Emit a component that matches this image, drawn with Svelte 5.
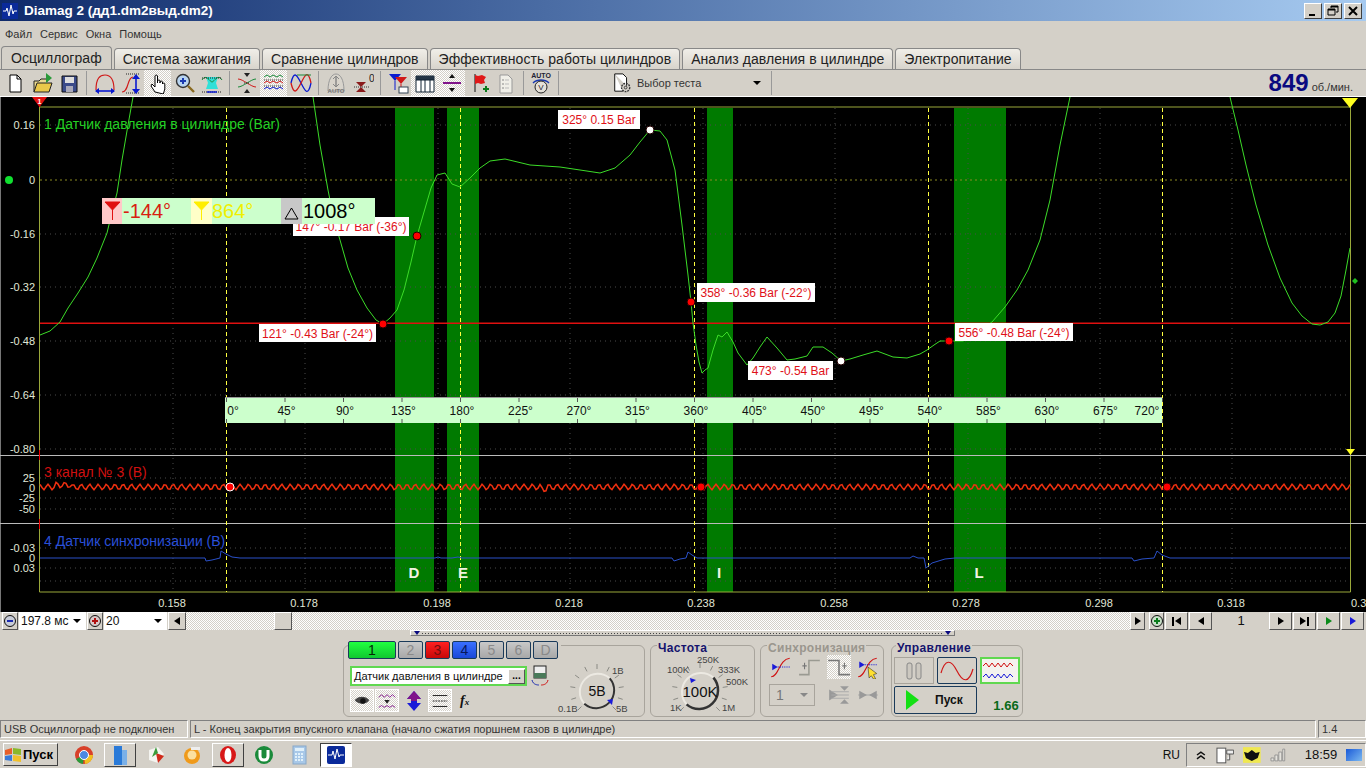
<script>
  const tabs = ['Система зажигания', 'Сравнение цилиндров', 'Эффективность работы цилиндров', 'Анализ давления в цилиндре', 'Электропитание'];
  const menu = ['Файл', 'Сервис', 'Окна', 'Помощь'];

  const icons = {
    new: '<path d="M6 3h7l4 4v13H6z" fill="#fff" stroke="#000"/><path d="M13 3v4h4" fill="none" stroke="#000"/>',
    open: '<path d="M3 20V9h5l2-2h6v3" fill="#e8d890" stroke="#222"/><path d="M3 20l3-9h15l-3 9z" fill="#e9c84a" stroke="#222"/><path d="M15 1l6 5-6 5z" fill="#2a9a3a"/>',
    save: '<path d="M4 4h15v16H4z" fill="#3a4a8a" stroke="#111"/><path d="M7 5h9v6H7z" fill="#ddd"/><path d="M8 14h7v6H8z" fill="#aab"/>',
    lobe: '<path d="M3 18C3 6 7 3 12 3s9 3 9 15" fill="none" stroke="#d01818" stroke-width="1.2"/><path d="M3 19h18" stroke="#0a1ad0" stroke-width="1.6"/><path d="M6 16l-4 3 4 3zM18 16l4 3-4 3z" fill="#0a1ad0"/>',
    scurve: '<path d="M2 20c7 0 5-15 11-15" fill="none" stroke="#d01818" stroke-width="1.2"/><path d="M6 2h14M6 21h14" stroke="#222" stroke-dasharray="1 1"/><path d="M16 5v14" stroke="#0a1ad0" stroke-width="1.6"/><path d="M12 7l4-5 4 5zM12 17l4 5 4-5z" fill="#0a1ad0"/>',
    hand: '<path d="M8 20l-4-6 1-2 3 3V4a1.3 1.3 0 012.500 0v7-2a1.3 1.3 0 012.500 0v2-1a1.3 1.3 0 012.500 0v2a1.2 1.2 0 012.300 0v5l-1.500 5z" fill="#fff" stroke="#000"/>',
    zoom: '<circle cx="9" cy="9" r="6.500" fill="#b8d4f0" stroke="#333" stroke-width="1.4"/><path d="M6 9h6M9 6v6" stroke="#1a3ab0" stroke-width="2"/><path d="M14 14l6 6" stroke="#8a6a20" stroke-width="2.4"/>',
    wide: '<path d="M5 5h12l-2 6 2 6H5l2-6z" fill="#30e0d8"/><path d="M1 8c4-7 8 2 10 2s6-9 10-2" fill="none" stroke="#1a8a3a"/><path d="M1 6h20M1 20h20" stroke="#222" stroke-dasharray="1 1"/><path d="M6 20h10" stroke="#0a1ad0" stroke-width="1.5"/>',
    cross: '<path d="M2 7c5 0 13 8 18 8" fill="none" stroke="#d01818"/><path d="M2 15c5 0 13-8 18-8" fill="none" stroke="#1a8a3a"/><path d="M8 11h6" stroke="#222" stroke-dasharray="1 1"/><path d="M8 1h6l-3 4zM8 21h6l-3-4z" fill="#222"/>',
    waves: '<path d="M1 5l3-2 3 2 3-2 4 2 3-2 3 2" fill="none" stroke="#1a8a3a"/><path d="M1 11l3-2 3 2 3-2 4 2 3-2 3 2" fill="none" stroke="#d01818"/><path d="M1 17l3-2 3 2 3-2 4 2 3-2 3 2" fill="none" stroke="#0a1ad0"/><path d="M1 8h20M1 14h20" stroke="#333" stroke-dasharray="1 1"/>',
    sines: '<path d="M1 11C4-2 7 3 11 11s7 14 10 0" fill="none" stroke="#0a1ad0" stroke-width="1.3"/><path d="M1 11C4 24 7 19 11 11s7-14 10 0" fill="none" stroke="#d01818" stroke-width="1.3"/><path d="M7 3h14" stroke="#1a8a3a"/>',
    auto: '<path d="M3 19C3 7 7 2 11 2s8 5 8 17z" fill="#d8d4cc" stroke="#999"/><path d="M11 5v9" stroke="#888" stroke-width="1.5"/><path d="M8 7l3-3 3 3M8 12l3 3 3-3" fill="none" stroke="#888"/><text x="11" y="21" font-size="6" font-weight="700" text-anchor="middle" fill="#777" font-family="Liberation Sans">AUTO</text>',
    zero: '<path d="M4 10h10l-5 5zM4 20h10l-5-5z" fill="#8a1a1a"/><path d="M2 15h16" stroke="#333" stroke-dasharray="1 1"/><text x="17" y="10" font-size="10" fill="#222" font-family="Liberation Sans">0</text>',
    filter: '<path d="M2 2h12l-6 7z" fill="#0a1ad0"/><path d="M8 9v9" stroke="#0a1ad0"/><path d="M8 5h12l-6 7z" fill="#d01818"/><path d="M14 12v6" stroke="#d01818"/><rect x="12" y="15" width="9" height="6" fill="#fff" stroke="#345"/>',
    table: '<path d="M2 4h18v16H2z" fill="#fff" stroke="#123"/><path d="M2 4h18v4H2z" fill="#234"/><path d="M7 8v12M11 8v12M16 8v12M2 8h18" stroke="#123"/>',
    cursor: '<path d="M2 11h18" stroke="#80148a" stroke-width="2"/><path d="M8 6h6l-3-4zM8 16h6l-3 4z" fill="#111"/>',
    flag: '<path d="M7 2v18" stroke="#111"/><path d="M7 3l3 1 4-1 4 2-2 3 1 3-4 1-3-1-3 1z" fill="#e01818"/><path d="M15 17h6M18 14v6" stroke="#0a7a1a" stroke-width="2"/>',
    sheet: '<path d="M5 3h8l4 4v14H5z" fill="#f0efe8" stroke="#999"/><path d="M7 8h2M7 12h2M7 16h2" stroke="#888"/><path d="M10 8h4M10 12h4M10 16h4" stroke="#bbb"/>',
    autov: '<text x="11" y="6" font-size="7" font-weight="700" text-anchor="middle" fill="#223" font-family="Liberation Sans">AUTO</text><path d="M3 11c4-4 12-4 16 0" fill="none" stroke="#1a3ab0" stroke-width="1.4"/><circle cx="11" cy="15" r="6" fill="#e4e0d8" stroke="#222"/><text x="11" y="18" font-size="8" text-anchor="middle" fill="#223" font-family="Liberation Sans">V</text>'
  };

  const toolbar = [
    { i: 'new' }, { i: 'open' }, { i: 'save' }, null,
    { i: 'lobe' }, { i: 'scurve' }, { i: 'hand', on: true }, { i: 'zoom' }, { i: 'wide' }, null,
    { i: 'cross' }, { i: 'waves', on: true }, { i: 'sines' }, null,
    { i: 'auto' }, { i: 'zero' }, null,
    { i: 'filter' }, { i: 'table', on: true }, { i: 'cursor', on: true }, { i: 'flag' }, { i: 'sheet' }, null,
    { i: 'autov' }, null
  ];

  // trace of channel 1, in screen coordinates
  const trace = [
    [40,335],[50,331],[60,322],[68,308],[78,293],[88,277],[97,258],[107,233],[112,212],[117,193],[122,160],[128,125],[133,97]
  ];
  const trace2 = [
    [313,97],[320,145],[328,190],[334,220],[340,240],[348,268],[357,290],[367,308],[376,320],[383,324],[390,318],[397,310],
    [404,290],[411,262],[417,236],[424,212],[431,188],[437,175],[445,173],[452,184],[460,187],[470,178],[480,168],[490,161],
    [505,159],[530,165],[560,167],[580,170],[600,173],[615,168],[630,155],[640,142],[650,130],[660,131],[667,140],[675,170],
    [682,225],[688,275],[691,302],[693,323],[696,345],[699,362],[702,373],[705,370],[708,368],[713,350],[718,335],[722,337],
    [727,332],[733,342],[738,353],[747,365],[753,358],[760,347],[767,337],[777,348],[787,360],[795,359],[807,356],[813,347],
    [823,347],[832,353],[841,361],[850,359],[863,355],[877,351],[893,357],[907,358],[920,354],[927,350],[934,345],[940,341],
    [949,341],[963,341],[975,335],[985,327],[992,322],[1005,307],[1017,290],[1028,270],[1040,240],[1050,200],[1060,145],[1070,97]
  ];
  const trace3 = [
    [1230,97],[1238,130],[1246,165],[1256,205],[1268,245],[1280,278],[1292,303],[1302,316],[1312,324],[1320,325],[1328,322],[1335,313],[1341,296],[1346,270],[1350,248]
  ];
  const line = (a) => a.map((p) => p.join(',')).join(' ');

  // channel 3 sits on a small ripple, channel 4 on a flat line with sync pulses
  const ripple = [];
  for (let x = 40; x <= 1350; x += 2) {
    const bump = x > 54 && x < 72 ? -2 : x > 540 && x < 548 ? 2 : 0;
    ripple.push([x, +(487 + 2.800 * Math.sin((x / 8.35) * Math.PI * 2) + bump).toFixed(1)]);
  }
  const sync = [
    [40,558],[205,558],[206,561],[212,560],[220,558],[221,551],[226,554],[232,557],[240,558],[435,558],[438,557],[441,558],[452,558],[458,557],[462,558],
    [672,558],[674,561],[680,559],[686,558],[688,552],[692,555],[697,558],[910,558],[913,556],[918,558],[924,558],[926,568],[932,563],[945,559],[955,558],
    [1132,558],[1134,561],[1142,559],[1154,558],[1157,551],[1162,555],[1170,558],[1350,558]
  ];

  const yTicks = [['0.16',125],['0',180],['-0.16',234],['-0.32',287],['-0.48',341],['-0.64',395],['-0.80',449],
    ['25',478],['0',488],['-25',498],['-50',509],['-0.03',548],['0',558],['0.03',568]];
  const xTicks = [['0.158',172],['0.178',304],['0.198',437],['0.218',569],['0.238',701],['0.258',834],['0.278',966],['0.298',1099],['0.318',1231]];
  const grid = [173,305,438,570,703,835,968,1100,1232];
  const gridY = [125,234,287,341,395,449,478,498,509,548,568,581];
  const bands = [[395,39],[447,32],[707,26],[954,52]];
  const marks = [226,460,694,928,1162];
  const degrees = Array.from({ length: 17 }, (_, i) => i * 45);
  const marks2 = [['D',414],['E',463],['I',719],['L',979]];

  const notes = [
    { x: 558, y: 110, w: 82, h: 19, t: '325° 0.15 Bar' },
    { x: 293, y: 217, w: 116, h: 19, t: '147° -0.17 Bar (-36°)' },
    { x: 697, y: 283, w: 118, h: 19, t: '358° -0.36 Bar (-22°)' },
    { x: 259, y: 324, w: 117, h: 18, t: '121° -0.43 Bar (-24°)' },
    { x: 748, y: 361, w: 85, h: 19, t: '473° -0.54 Bar' },
    { x: 955, y: 323, w: 118, h: 18, t: '556° -0.48 Bar (-24°)' }
  ];
  const dots = [[650,130,'#fff'],[417,236,'#f00'],[691,302,'#f00'],[383,324,'#f00'],[841,361,'#fff'],[949,341,'#f00']];

  const channels = [
    { n: '1', c: 'green' }, { n: '2', c: '' }, { n: '3', c: 'red' }, { n: '4', c: 'blue' },
    { n: '5', c: '' }, { n: '6', c: '' }, { n: 'D', c: '' }
  ];

  function knobTicks(cx, cy, r1, r2) {
    const out = [];
    for (let a = 135; a <= 405; a += 27) {
      const t = (a * Math.PI) / 180;
      out.push([cx + r1 * Math.cos(t), cy + r1 * Math.sin(t), cx + r2 * Math.cos(t), cy + r2 * Math.sin(t)]);
    }
    return out;
  }
  const voltTicks = knobTicks(35, 34, 22, 27);
  const freqTicks = knobTicks(47, 36, 23, 28);
</script>

<div class="window">
  <header class="titlebar">
    <svg class="appicon" viewBox="0 0 16 16"><rect width="16" height="16" fill="#0a2a9a" /><path d="M1 8h3l1-3 2 8 2-11 2 9 1-3h3" fill="none" stroke="#fff" /></svg>
    <span class="title">Diamag 2 (дд1.dm2выд.dm2)</span>
    <div class="winbtns">
      <button class="winbtn"><svg viewBox="0 0 16 14"><path d="M4 10h6v2H4z" /></svg></button>
      <button class="winbtn"><svg viewBox="0 0 16 14"><path d="M6 2h7v6h-2M6 2v2M3 5h7v6H3zM3 5.500h7" fill="none" stroke="#000" /><path d="M6 2h7v1.500H6zM3 5h7v1.500H3z" /></svg></button>
      <button class="winbtn close"><svg viewBox="0 0 16 14"><path d="M4 3l8 8M12 3l-8 8" stroke="#000" stroke-width="2" /></svg></button>
    </div>
  </header>

  <nav class="menu">
    {#each menu as m}<span>{m}</span>{/each}
  </nav>

  <div class="tabs">
    <div class="tab active">Осциллограф</div>
    {#each tabs as t}<div class="tab">{t}</div>{/each}
  </div>

  <div class="toolbar">
    {#each toolbar as b}
      {#if b}
        <div class="tool" class:on={b.on}>
          <svg viewBox="0 0 22 22" width="22" height="22">{@html icons[b.i]}</svg>
        </div>
      {:else}
        <div class="sep"></div>
      {/if}
    {/each}
    <div class="testpick">
      <svg viewBox="0 0 22 24" width="20" height="22">
        <path d="M3 2h9l4 4v9M3 2v19h9" fill="#fff" stroke="#000" />
        <circle cx="15" cy="17" r="4.500" fill="none" stroke="#333" stroke-width="1.500" stroke-dasharray="2 1" />
        <circle cx="15" cy="17" r="1.500" fill="none" stroke="#333" />
      </svg>
      <span>Выбор теста</span>
      <i class="caret"></i>
    </div>
    <div class="sep"></div>
    <div class="rpm"><b>849</b> <span>об./мин.</span></div>
  </div>

  <svg class="scope" viewBox="0 97 1366 515" font-family="Liberation Sans, Arial, sans-serif">
    <rect x="0" y="97" width="1366" height="515" fill="#000" />
    <path d="M0.500 97v515" stroke="#777" />

    {#each bands as [x, w]}
      <rect {x} y="108" width={w} height="484" fill="#007a00" />
    {/each}

    {#each grid as x}
      <path d="M{x} 108V592" stroke="#4a4a4a" stroke-dasharray="1 4" />
    {/each}
    {#each gridY as y}
      <path d="M40 {y}H1350" stroke="#4a4a4a" stroke-dasharray="1 4" />
    {/each}
    <path d="M40 180H1350" stroke="#8a8a20" stroke-dasharray="2 3" />

    <path d="M39.500 107V592H1350.500V107H39.500" fill="none" stroke="#9aa83a" />
    <path d="M0 455.500H1366M0 523.500H1366" stroke="#bbb" />
    <path d="M39.500 97v10M39.500 450v10M39.500 519v10" stroke="#e00" />

    {#each marks as x}
      <path d="M{x + 0.5} 108V592" stroke="#ffff40" stroke-dasharray="4 3" />
    {/each}

    <rect x="40" y="322.500" width="1310" height="1.500" fill="#e01010" />

    <polyline points={line(trace)} fill="none" stroke="#3cdc28" />
    <polyline points={line(trace2)} fill="none" stroke="#3cdc28" />
    <polyline points={line(trace3)} fill="none" stroke="#3cdc28" />
    <polyline points={line(ripple)} fill="none" stroke="#f03010" stroke-width="1.500" />
    <polyline points={line(sync)} fill="none" stroke="#2a50c8" />

    {#each yTicks as [t, y]}
      <text x="35" y={y + 4} class="tick" text-anchor="end">{t}</text>
    {/each}
    {#each xTicks as [t, x]}
      <text {x} y="607" class="tick" text-anchor="middle">{t}</text>
    {/each}
    <text x="1351" y="607" class="tick">0.3</text>

    <text x="44" y="129" class="chan" fill="#24d024">1 Датчик давления в цилиндре (Bar)</text>
    <text x="44" y="477" class="chan" fill="#d01010">3 канал № 3 (В)</text>
    <text x="44" y="546" class="chan" fill="#2a50d8">4 Датчик синхронизации (В)</text>

    {#each marks2 as [t, x]}
      <text {x} y="578" class="bandmark" text-anchor="middle">{t}</text>
    {/each}

    <rect x="225" y="397" width="937" height="26" fill="#ccffcc" />
    <path d="M225 397.500H1162" stroke="#999" />
    {#each degrees as d, i}
      <path d="M{226.5 + i * 58.5} 398v4M{226.5 + i * 58.5} 419v4" stroke="#555" />
      <text x={i === 0 ? 233 : i === 16 ? 1147 : 228 + i * 58.5} y="415" class="deg" text-anchor="middle">{d}°</text>
    {/each}

    {#each notes as n}
      <rect x={n.x} y={n.y} width={n.w} height={n.h} fill="#fff" />
      <text x={n.x + n.w / 2} y={n.y + 14} class="note" text-anchor="middle">{n.t}</text>
    {/each}
    {#each dots as [x, y, c]}
      <circle cx={x} cy={y} r="4" fill={c} stroke="#200" />
    {/each}
    <circle cx="230" cy="487" r="4" fill="#f00" stroke="#fff" />
    <circle cx="701" cy="487" r="4" fill="#f00" stroke="#300" />
    <circle cx="1167" cy="487" r="4" fill="#f00" stroke="#300" />

    <circle cx="9" cy="180" r="4" fill="#10e030" />
    <path d="M32 97h15l-7.500 10z" fill="#e01010" />
    <text x="39.500" y="104" font-size="7" font-weight="700" fill="#fff" text-anchor="middle">1</text>
    <path d="M1342 98h16l-8 10z" fill="#ffff20" />
    <path d="M1346 449h9l-4.500 6z" fill="#ffff20" />
    <path d="M1355 278l3 3-3 3-3-3z" fill="#20c020" />

    <rect x="102" y="198" width="273" height="26" fill="#ccffcc" />
    <rect x="102" y="198" width="20" height="26" fill="#ffc8c8" />
    <rect x="191" y="198" width="21" height="26" fill="#ffffc8" />
    <rect x="281" y="198" width="21" height="26" fill="#c8c8c8" />
    <path d="M105 202h15l-7.500 8zM112.500 210v10" fill="#e01010" stroke="#e01010" />
    <path d="M194 202h15l-7.500 8zM201.500 210v10" fill="#ffee00" stroke="#ffee00" />
    <path d="M285 219l6.500-11 6.500 11z" fill="none" stroke="#000" />
    <text x="123" y="218" class="big" fill="#d82010">-144°</text>
    <text x="212" y="218" class="big" fill="#f0f000">864°</text>
    <text x="303" y="218" class="big" fill="#000">1008°</text>
  </svg>

  <div class="scrollrow">
    <button class="round"><svg viewBox="0 0 14 14"><circle cx="7" cy="7" r="5.500" fill="#c8ccd8" stroke="#111" /><path d="M4 7h6" stroke="#1a2ab0" stroke-width="2" /></svg></button>
    <div class="combo first"><span>197.8 мс</span><i class="caret"></i></div>
    <button class="round"><svg viewBox="0 0 14 14"><circle cx="7" cy="7" r="5.500" fill="#d8c8c8" stroke="#111" /><path d="M4 7h6M7 4v6" stroke="#b01010" stroke-width="2" /></svg></button>
    <div class="combo second"><span>20</span><i class="caret"></i></div>
    <button class="step"><i class="tri left"></i></button>
    <div class="track"><div class="thumb"></div></div>
    <button class="step short"><i class="tri right"></i></button>
    <button class="round plus"><svg viewBox="0 0 14 14"><circle cx="7" cy="7" r="5.500" fill="#c8e0c8" stroke="#111" /><path d="M4 7h6M7 4v6" stroke="#0a7a1a" stroke-width="2" /></svg></button>
    <button class="nav"><b class="bar"></b><i class="tri left"></i></button>
    <button class="nav"><i class="tri left"></i></button>
    <span class="page">1</span>
    <button class="nav"><i class="tri right"></i></button>
    <button class="nav"><i class="tri right"></i><b class="bar"></b></button>
    <button class="nav"><i class="tri right g"></i></button>
    <button class="nav"><i class="tri right b"></i></button>
  </div>

  <div class="panel">
    <div class="handle"><i class="down"></i><span></span><i class="down"></i></div>
    <div class="groups">
      <section class="group g1">
        <div class="chanrow">
          {#each channels as ch, i}
            <button class="chbtn {ch.c}" class:wide={i === 0}>{ch.n}</button>
          {/each}
        </div>
        <div class="g1body">
          <div>
            <div class="namerow">
              <div class="namebox"><span>Датчик давления в цилиндре</span><button class="dots">...</button></div>
              <svg viewBox="0 0 22 22" width="22" height="22"><rect x="5" y="1" width="12" height="12" fill="#eee" stroke="#222" /><rect x="5" y="8" width="12" height="5" fill="#4a7a5a" /><path d="M3 15c1 5 6 5 7 5" fill="none" stroke="#1a2ab0" /><path d="M19 15c-1 5-6 5-7 5" fill="none" stroke="#d01010" /></svg>
            </div>
            <div class="iconrow">
              <div class="sq on"><svg viewBox="0 0 22 22" width="20" height="20"><path d="M3 10c4-5 12-5 16 0-2 5-12 6-16 0z" fill="#444" /><circle cx="12" cy="11" r="3" fill="#111" /></svg></div>
              <div class="sq on"><svg viewBox="0 0 22 22" width="20" height="20"><path d="M2 7l3-3 3 3 3-3 3 3 3-3 3 3" fill="none" stroke="#80148a" /><path d="M2 18l3-2 3 2 3-2 3 2 3-2 3 2" fill="none" stroke="#80148a" /><path d="M8 10h6l-3 4z" fill="#222" /></svg></div>
              <div class="sq tight"><svg viewBox="0 0 22 22" width="22" height="22"><path d="M11 1l7 8h-4v4h4l-7 8-7-8h4V9H4z" fill="#1a1ad8" /><path d="M11 1l7 8h-4v2H8V9H4z" fill="#80148a" /></svg></div>
              <div class="sq on"><svg viewBox="0 0 22 22" width="20" height="20"><path d="M3 5h16M3 17h16" stroke="#111" /><path d="M3 11h16" stroke="#111" stroke-dasharray="2 1" /></svg></div>
              <em class="fx">f<small>x</small></em>
            </div>
          </div>
          <svg class="knob" viewBox="0 0 76 62" width="76" height="62">
            {#each voltTicks as t}<line x1={t[0]} y1={t[1]} x2={t[2]} y2={t[3]} stroke="#8a8a84" />{/each}
            <circle cx="35" cy="34" r="18" fill="#d4d0c8" />
            <path d="M22.300 46.700a18 18 0 0 1 25.400-25.400" fill="none" stroke="#ece9e2" stroke-width="2" />
            <path d="M47.700 21.300a18 18 0 0 1-25.400 25.400" fill="none" stroke="#333" stroke-width="2" />
            <path d="M45 43l6-1-1 6z" fill="#1a1ad8" />
            <text x="35" y="39" class="knobv" text-anchor="middle">5В</text>
            <text x="50" y="17" class="knobl">1В</text>
            <text x="-4" y="55" class="knobl">0.1В</text>
            <text x="54" y="55" class="knobl">5В</text>
          </svg>
        </div>
      </section>

      <section class="group g2">
        <div class="legend navy">Частота</div>
        <svg class="knob2" viewBox="0 0 100 62" width="100" height="62">
          {#each freqTicks as t}<line x1={t[0]} y1={t[1]} x2={t[2]} y2={t[3]} stroke="#8a8a84" />{/each}
          <circle cx="47" cy="36" r="19" fill="#d4d0c8" />
          <path d="M33.600 49.400a19 19 0 0 1 26.800-26.800" fill="none" stroke="#ece9e2" stroke-width="2" />
          <path d="M60.400 22.600a19 19 0 0 1-26.800 26.800" fill="none" stroke="#333" stroke-width="2.500" />
          <path d="M37 23l6 2-5 3z" fill="#1a1ad8" />
          <text x="47" y="42" class="knobv big2" text-anchor="middle">100K</text>
          <text x="14" y="18" class="knobl">100K</text>
          <text x="44" y="8" class="knobl">250K</text>
          <text x="65" y="18" class="knobl">333K</text>
          <text x="73" y="30" class="knobl">500K</text>
          <text x="69" y="56" class="knobl">1M</text>
          <text x="17" y="56" class="knobl">1K</text>
        </svg>
      </section>

      <section class="group g3">
        <div class="legend gray">Синхронизация</div>
        <div class="syncgrid">
          <svg viewBox="0 0 22 22" width="24" height="24"><path d="M2 20C9 20 9 4 19 3" fill="none" stroke="#d01010" /><path d="M3 8l5 3-5 3z" fill="#1a1ad8" /><path d="M8 11h12" stroke="#1a1ad8" stroke-dasharray="1 1" /></svg>
          <svg viewBox="0 0 22 22" width="24" height="24"><path d="M1 18h9V5h10" fill="none" stroke="#9a9a92" stroke-width="1.400" /><path d="M4 10h4M6 7v6" stroke="#777" /></svg>
          <div class="syncon"><svg viewBox="0 0 22 22" width="24" height="24"><path d="M1 5h10v13h10" fill="none" stroke="#777" stroke-width="1.400" /><path d="M14 10h4M16 7v6" stroke="#777" /></svg></div>
          <svg viewBox="0 0 22 22" width="24" height="24"><path d="M2 20C9 20 9 4 19 3" fill="none" stroke="#d01010" /><path d="M3 6l5 3-5 3z" fill="#1a1ad8" /><path d="M8 9h12" stroke="#1a1ad8" stroke-dasharray="1 1" /><path d="M11 11l8 6-3 1 2 4-2 0-2-3-2 2z" fill="#ffe030" stroke="#222" stroke-width=".5" /></svg>
          <div class="mini"><span>1</span><i class="caret gray"></i></div>
          <svg viewBox="0 0 22 22" width="24" height="24"><path d="M2 6l8 5-8 5z" fill="#999" /><path d="M4 8h16M4 11h16M4 14h16" stroke="#aaa" /><path d="M12 3h8l-4 4zM12 19h8l-4-4z" fill="#999" /></svg>
          <svg viewBox="0 0 22 22" width="24" height="24"><path d="M2 11h18" stroke="#aaa" /><path d="M3 7l7 4-7 4zM19 7l-7 4 7 4z" fill="#999" /></svg>
        </div>
      </section>

      <section class="group g4">
        <div class="legend navy">Управление</div>
        <div class="ctrlgrid">
          <button class="ctl flat"><svg viewBox="0 0 24 22" width="24" height="22"><rect x="5" y="3" width="5" height="16" rx="2" fill="#ccc8c0" stroke="#888" /><rect x="14" y="3" width="5" height="16" rx="2" fill="#ccc8c0" stroke="#888" /></svg></button>
          <button class="ctl dark"><svg viewBox="0 0 36 24" width="36" height="24"><path d="M2 14C6 0 12 0 18 12s12 12 16-2" fill="none" stroke="#d01818" stroke-width="1.200" /></svg></button>
          <button class="ctl greenb"><svg viewBox="0 0 36 24" width="36" height="24"><path d="M1 7l3-3 3 4 3-4 3 4 3-4 3 4 3-4 3 4 3-4 3 3" fill="none" stroke="#d01010" /><path d="M1 18l3-3 3 4 3-4 3 4 3-4 3 4 3-4 3 4 3-4 3 3" fill="none" stroke="#1a1ad8" /></svg></button>
          <button class="start"><svg viewBox="0 0 14 20" width="14" height="20"><path d="M1 0l13 10L1 20z" fill="#14e014" /></svg><b>Пуск</b></button>
          <b class="ver">1.66</b>
        </div>
      </section>
    </div>
  </div>

  <footer class="status">
    <div class="cell c1">USB Осциллограф не подключен</div>
    <div class="cell c2">L - Конец закрытия впускного клапана (начало сжатия поршнем газов в цилиндре)</div>
    <div class="cell c3">1.4</div>
  </footer>

  <div class="taskbar">
    <button class="startbtn">
      <svg viewBox="0 0 18 16" width="18" height="16"><path d="M1 3l7-2v6l-7 1z" fill="#e8602a" /><path d="M9 1l8 1v6l-8-1z" fill="#8ab82a" /><path d="M1 9l7-1v6l-7-1z" fill="#3a7ad8" /><path d="M9 8l8 1v6l-8-1z" fill="#f0c02a" /></svg>
      <b>Пуск</b>
    </button>
    <div class="quick">
      <div class="ti"><svg viewBox="0 0 20 20" width="20" height="20"><circle cx="10" cy="10" r="9" fill="#d8402a" /><path d="M10 10L2 14a9 9 0 0 0 7 5z" fill="#2a9a3a" /><path d="M10 10l1 9a9 9 0 0 0 8-9z" fill="#f0c020" /><circle cx="10" cy="10" r="4.500" fill="#4a88e0" stroke="#fff" /></svg></div>
      <div class="ti raised"><svg viewBox="0 0 20 22" width="20" height="22"><path d="M4 2h8v19H4z" fill="#2a7ad8" /><path d="M12 6h5v15h-5z" fill="#7ab0e8" /></svg></div>
      <div class="ti"><svg viewBox="0 0 20 20" width="20" height="20"><path d="M3 5l9-3 6 7-6 9-9-3z" fill="#f4f4f0" /><path d="M10 8l8 3-6 7z" fill="#d02a1a" /><path d="M6 12l4-10 2 6z" fill="#3a9a3a" /></svg></div>
      <div class="ti"><svg viewBox="0 0 20 20" width="20" height="20"><circle cx="10" cy="11" r="8" fill="#f09a1a" /><circle cx="10" cy="10" r="4.500" fill="#fbe0a0" /><path d="M9 2h9v3H9z" fill="#eee" /></svg></div>
      <div class="ti raised"><svg viewBox="0 0 20 20" width="20" height="20"><ellipse cx="10" cy="10" rx="8" ry="9" fill="#d81818" /><ellipse cx="10" cy="10" rx="3.500" ry="7" fill="#fff" /></svg></div>
      <div class="ti"><svg viewBox="0 0 20 20" width="20" height="20"><circle cx="10" cy="10" r="9" fill="#1a8a3a" /><path d="M6 5v6c0 3 2 4 4 4s4-1 4-4V5" fill="none" stroke="#fff" stroke-width="3" /></svg></div>
      <div class="ti"><svg viewBox="0 0 20 20" width="20" height="20"><rect x="3" y="1" width="13" height="18" fill="#a8c8e8" stroke="#88a8c8" /><rect x="5" y="3" width="9" height="3" fill="#e0f0fa" /><path d="M5 9h9M5 12h9M5 15h9" stroke="#e0f0fa" stroke-width="2" stroke-dasharray="2 1" /></svg></div>
      <div class="ti pressed"><svg viewBox="0 0 20 20" width="20" height="20"><rect x="1" y="1" width="18" height="18" rx="2" fill="#0a2a9a" /><path d="M2 10h4l1-4 2 8 2-10 2 8 1-2h4" fill="none" stroke="#fff" /></svg></div>
    </div>
    <span class="lang">RU</span>
    <div class="tray">
      <svg viewBox="0 0 10 10" width="10" height="10"><path d="M1 5l4-3 4 3M1 9l4-3 4 3" fill="none" stroke="#111" stroke-width="1.500" /></svg>
      <svg viewBox="0 0 20 20" width="20" height="20"><rect x="2" y="3" width="9" height="15" fill="#fff" stroke="#555" /><path d="M12 5h7v4h-7zM15 9v6h-3" fill="#eee" stroke="#555" /></svg>
      <svg viewBox="0 0 18 16" width="18" height="16"><rect width="18" height="16" fill="#f0e850" /><path d="M1 5l4 1 4-3 4 3 4-1-2 6-6 3-6-3z" fill="#111" /></svg>
      <svg viewBox="0 0 16 14" width="16" height="14"><path d="M1 10h3v3H1zM5 7h3v6H5zM9 4h3v9H9zM13 1h2v12h-2z" fill="#e4e2dc" stroke="#888" stroke-width=".8" /></svg>
      <span class="clock">18:59</span>
      <div class="showdesk"></div>
    </div>
  </div>
</div>

<style>
  :global(body) {
    margin: 0;
    overflow: hidden;
    background: #d4d0c8;
  }

  .window {
    width: 1366px;
    height: 768px;
    display: flex;
    flex-direction: column;
    background: #d4d0c8;
    font-family: "Liberation Sans", Arial, sans-serif;
    font-size: 11px;
    color: #111;
    overflow: hidden;
  }

  button {
    font-family: inherit;
    padding: 0;
    margin: 0;
  }

  .titlebar {
    height: 21px;
    flex: none;
    display: flex;
    align-items: center;
    padding: 0 4px 0 2px;
    gap: 6px;
    background: linear-gradient(90deg, #0f2a6a 0%, #4a6ca4 40%, #a6caf0 100%);
    color: #fff;
  }

  .appicon {
    width: 16px;
    height: 16px;
  }

  .title {
    font-weight: 700;
    font-size: 13.500px;
  }

  .winbtns {
    margin-left: auto;
    display: flex;
    gap: 2px;
  }

  .winbtn {
    width: 18px;
    height: 16px;
    background: #d4d0c8;
    border: 1px solid;
    border-color: #fff #404040 #404040 #fff;
    display: flex;
  }

  .winbtn svg {
    width: 16px;
    height: 14px;
  }

  .menu {
    height: 26px;
    flex: none;
    display: flex;
    align-items: center;
    gap: 8px;
    padding-left: 5px;
    color: #333;
  }

  .tabs {
    height: 22px;
    flex: none;
    display: flex;
    align-items: flex-end;
    gap: 2px;
    padding-left: 1px;
    font-size: 14px;
    letter-spacing: 0.05px;
    color: #222;
  }

  .tab {
    height: 20px;
    padding: 0 8px;
    display: flex;
    align-items: center;
    background: linear-gradient(#f0eee8, #d8d4cc);
    border: 1px solid #888;
    border-bottom: none;
    border-radius: 4px 4px 0 0;
    white-space: nowrap;
  }

  .tab.active {
    height: 22px;
    background: #d4d0c8;
    padding: 0 9px;
  }

  .toolbar {
    height: 28px;
    flex: none;
    display: flex;
    align-items: center;
    padding-left: 1px;
    border-top: 1px solid #888;
    border-bottom: 1px solid #fff;
    box-sizing: border-box;
  }

  .tool {
    width: 27px;
    height: 26px;
    display: flex;
    align-items: center;
    justify-content: center;
    box-sizing: border-box;
  }

  .tool.on {
    background: repeating-conic-gradient(#fff 0 25%, #d4d0c8 0 50%) 0 0 / 2px 2px;
  }

  .sep {
    width: 8px;
    height: 24px;
    flex: none;
    background: linear-gradient(#999, #999) center / 1px 100% no-repeat;
  }

  .testpick {
    margin-left: 50px;
    width: 155px;
    display: flex;
    align-items: center;
    gap: 5px;
    font-size: 11px;
    color: #333;
  }

  .caret {
    display: block;
    width: 0;
    height: 0;
    margin-left: auto;
    border: 4px solid transparent;
    border-top-color: #000;
    border-bottom: none;
  }

  .testpick .caret {
    margin-right: 6px;
  }

  .rpm {
    margin-left: auto;
    padding-right: 13px;
    display: flex;
    align-items: baseline;
    gap: 3px;
  }

  .rpm b {
    font-size: 24px;
    color: #0a0a80;
  }

  .rpm span {
    font-size: 11px;
    color: #333;
  }

  .scope {
    width: 1366px;
    height: 515px;
    flex: none;
    display: block;
  }

  .tick {
    font-size: 11px;
    fill: #e0e8d8;
  }

  .chan {
    font-size: 14px;
  }

  .bandmark {
    font-size: 15px;
    font-weight: 700;
    fill: #f0f4e0;
  }

  .deg {
    font-size: 12px;
    fill: #111;
  }

  .note {
    font-size: 12px;
    fill: #e01018;
  }

  .big {
    font-size: 20px;
  }

  .scrollrow {
    height: 18px;
    flex: none;
    display: flex;
    align-items: stretch;
    padding: 0 2px;
  }

  .round {
    width: 16px;
    border: 1px solid;
    border-color: #fff #555 #555 #fff;
    background: #d4d0c8;
    display: flex;
    align-items: center;
    justify-content: center;
    margin-right: 1px;
    flex: none;
  }

  .round svg {
    width: 14px;
    height: 14px;
    flex: none;
  }

  .round.plus {
    width: 15px;
    margin: 0 1px 0 4px;
  }

  .combo {
    margin-right: 1px;
    background: #fff;
    display: flex;
    align-items: center;
    padding: 0 5px 0 2px;
    box-sizing: border-box;
    font-size: 12px;
    flex: none;
  }

  .combo.first {
    width: 67px;
  }

  .combo.second {
    width: 63px;
  }

  .step {
    width: 18px;
    border: 1px solid;
    border-color: #fff #555 #555 #fff;
    background: #d4d0c8;
    display: flex;
    align-items: center;
    justify-content: center;
    flex: none;
  }

  .step.short {
    width: 15px;
  }

  .track {
    width: 944px;
    flex: none;
    background: repeating-conic-gradient(#fff 0 25%, #d4d0c8 0 50%) 0 0 / 2px 2px;
    padding-left: 88px;
    box-sizing: border-box;
  }

  .thumb {
    width: 18px;
    height: 18px;
    box-sizing: border-box;
    background: #d4d0c8;
    border: 1px solid;
    border-color: #fff #555 #555 #fff;
  }

  .nav {
    width: 23px;
    margin-right: 1px;
    border: 1px solid;
    border-color: #fff #555 #555 #fff;
    background: #d4d0c8;
    display: flex;
    align-items: center;
    justify-content: center;
    gap: 1px;
    flex: none;
  }

  .tri {
    display: block;
    width: 0;
    height: 0;
    border: 4px solid transparent;
  }

  .tri.left {
    border-right: 6px solid #000;
    border-left: none;
  }

  .tri.right {
    border-left: 6px solid #000;
    border-right: none;
  }

  .tri.g {
    border-left-color: #0a8a1a;
  }

  .tri.b {
    border-left-color: #1a1ad8;
  }

  .bar {
    display: block;
    width: 2px;
    height: 9px;
    background: #000;
  }

  .page {
    width: 56px;
    text-align: center;
    font-size: 13px;
    line-height: 18px;
    flex: none;
  }

  .panel {
    height: 90px;
    flex: none;
  }

  .handle {
    width: 545px;
    height: 6px;
    margin-left: 410px;
    box-sizing: border-box;
    border: 1px solid;
    border-color: #fff #777 #777 #fff;
    display: flex;
    align-items: center;
    gap: 2px;
    padding: 0 3px;
  }

  .handle span {
    flex: 1;
    height: 1px;
    background: repeating-linear-gradient(90deg, #444 0 1px, transparent 1px 3px);
  }

  .down {
    width: 0;
    height: 0;
    border: 3px solid transparent;
    border-top: 4px solid #0a0a80;
    border-bottom: none;
  }

  .groups {
    display: flex;
    gap: 5px;
    margin: 9px 0 0 343px;
  }

  .group {
    height: 72px;
    box-sizing: border-box;
    border: 1px solid #a8a49c;
    border-radius: 6px;
    flex: none;
  }

  .g1 {
    width: 302px;
    padding-left: 4px;
  }

  .g2 {
    width: 105px;
  }

  .g3 {
    width: 124px;
  }

  .g4 {
    width: 132px;
    margin-left: 2px;
  }

  .g4 .legend {
    margin-left: 4px;
  }

  .legend {
    width: fit-content;
    margin: -5px 0 0 6px;
    padding: 0 1px;
    background: #d4d0c8;
    font-size: 12px;
    font-weight: 700;
    line-height: 14px;
    letter-spacing: 0.3px;
  }

  .navy {
    color: #14146e;
  }

  .gray {
    color: #9a968e;
  }

  .chanrow {
    display: flex;
    gap: 2px;
    margin-top: -5px;
    width: fit-content;
    background: #d4d0c8;
    padding-right: 3px;
  }

  .chbtn {
    width: 25px;
    height: 18px;
    border: 1px solid #1a3a5a;
    border-radius: 2px;
    background: linear-gradient(#c8c8c8, #a8a8a8);
    color: #8a8a8a;
    font-size: 14px;
    line-height: 14px;
  }

  .chbtn.wide {
    width: 48px;
  }

  .chbtn.green {
    background: linear-gradient(#20ff40, #10c830);
    color: #052a05;
  }

  .chbtn.red {
    background: linear-gradient(#ff2020, #c80808);
    color: #701010;
  }

  .chbtn.blue {
    background: linear-gradient(#3a70ff, #1a48d8);
    color: #08185a;
  }

  .g1body {
    display: flex;
    justify-content: space-between;
    margin-top: 6px;
  }

  .namerow {
    display: flex;
    align-items: center;
    gap: 2px;
    margin-left: 2px;
  }

  .namebox {
    width: 177px;
    height: 20px;
    box-sizing: border-box;
    border: 2px solid #60d850;
    background: #fff;
    display: flex;
    align-items: center;
    justify-content: space-between;
    padding-left: 2px;
    font-size: 11px;
    white-space: nowrap;
  }

  .dots {
    width: 17px;
    height: 15px;
    background: #d4d0c8;
    border: 1px solid;
    border-color: #fff #555 #555 #fff;
    font-size: 10px;
    font-weight: 700;
    line-height: 6px;
  }

  .iconrow {
    display: flex;
    align-items: center;
    gap: 1px;
    margin: 2px 0 0 2px;
  }

  .sq {
    width: 24px;
    height: 23px;
    display: flex;
    align-items: center;
    justify-content: center;
  }

  .sq.tight {
    margin: 0 1px 0 2px;
  }

  .sq.on {
    background: repeating-conic-gradient(#fff 0 25%, #d4d0c8 0 50%) 0 0 / 2px 2px;
    box-shadow: inset 0 0 0 1px #fff;
  }

  .fx {
    font-family: "Liberation Serif", serif;
    font-size: 14px;
    font-weight: 700;
    margin-left: 7px;
  }

  .fx small {
    font-size: 9px;
  }

  .knob {
    margin: -8px 6px 0 0;
    overflow: visible;
  }

  .knobl {
    font-size: 9.500px;
    fill: #444;
  }

  .knobv {
    font-size: 14px;
    fill: #111;
  }

  .big2 {
    font-size: 15px;
  }

  .knob2 {
    display: block;
    margin: 0 auto;
  }

  .syncgrid {
    display: grid;
    grid-template-columns: 29px 29px 29px 29px;
    justify-items: center;
    align-items: center;
    margin: 0 0 0 5px;
    row-gap: 4px;
  }

  .syncon {
    display: flex;
    background: repeating-conic-gradient(#fff 0 25%, #d4d0c8 0 50%) 0 0 / 2px 2px;
  }

  .mini {
    grid-column: span 2;
    justify-self: start;
    margin-left: 3px;
    width: 46px;
    height: 22px;
    box-sizing: border-box;
    border: 1px solid #a8a49c;
    display: flex;
    align-items: center;
    padding: 0 6px;
    font-size: 14px;
    color: #777;
  }

  .caret.gray {
    border-top-color: #888;
  }

  .ctrlgrid {
    display: grid;
    grid-template-columns: 40px 40px 40px;
    column-gap: 3px;
    row-gap: 2px;
    margin: 2px 0 0 2px;
  }

  .ctl {
    height: 27px;
    background: #d4d0c8;
    display: flex;
    align-items: center;
    justify-content: center;
    box-sizing: border-box;
  }

  .ctl.flat {
    border: 1px solid #a8a49c;
  }

  .ctl.dark {
    border: 1px solid #1a3a5a;
    border-radius: 2px;
  }

  .ctl.greenb {
    border: 2px solid #60d850;
    background: #f4f2ee;
  }

  .start {
    grid-column: span 2;
    height: 28px;
    background: #d4d0c8;
    border: 1px solid #1a3a5a;
    border-radius: 2px;
    display: flex;
    align-items: center;
    padding-left: 10px;
    gap: 16px;
    font-size: 12px;
    color: #111;
  }

  .ver {
    align-self: end;
    justify-self: center;
    margin: 0 0 1px 12px;
    font-size: 13px;
    color: #0a6a1a;
  }

  .status {
    height: 18px;
    flex: none;
    display: flex;
    gap: 2px;
    font-size: 11px;
    color: #333;
  }

  .cell {
    box-sizing: border-box;
    border: 1px solid;
    border-color: #808080 #fff #fff #808080;
    line-height: 16px;
    padding-left: 3px;
    white-space: nowrap;
  }

  .c1 {
    width: 188px;
    flex: none;
  }

  .c2 {
    flex: 1;
  }

  .c3 {
    width: 48px;
    flex: none;
  }

  .taskbar {
    height: 28px;
    margin-top: 2px;
    flex: none;
    display: flex;
    align-items: center;
    border-top: 1px solid #fff;
    box-sizing: border-box;
  }

  .startbtn {
    width: 55px;
    height: 23px;
    margin-left: 3px;
    display: flex;
    align-items: center;
    gap: 1px;
    background: #d4d0c8;
    border: 1px solid;
    border-color: #fff #404040 #404040 #fff;
    font-size: 13px;
    flex: none;
  }

  .quick {
    display: flex;
    margin-left: 10px;
    gap: 4px;
    flex: none;
  }

  .ti {
    width: 32px;
    height: 24px;
    display: flex;
    align-items: center;
    justify-content: center;
    box-sizing: border-box;
  }

  .ti.raised {
    border: 1px solid;
    border-color: #fff #404040 #404040 #fff;
  }

  .ti.pressed {
    background: #fff;
    border: 1px solid;
    border-color: #404040 #fff #fff #404040;
  }

  .lang {
    margin-left: auto;
    font-size: 12px;
    margin-right: 6px;
  }

  .tray {
    width: 180px;
    height: 24px;
    box-sizing: border-box;
    border: 1px solid;
    border-color: #808080 #fff #fff #808080;
    display: flex;
    align-items: center;
    gap: 9px;
    padding-left: 9px;
    flex: none;
  }

  .clock {
    font-size: 13px;
    margin-left: 10px;
  }

  .showdesk {
    width: 16px;
    height: 12px;
    background: linear-gradient(135deg, #1a5ad8, #7ab8f0);
    margin-left: auto;
    margin-right: 3px;
  }
</style>
